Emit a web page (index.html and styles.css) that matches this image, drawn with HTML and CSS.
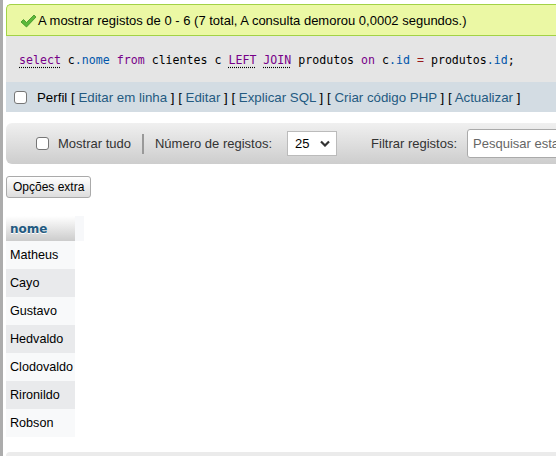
FILE: index.html
```html
<!DOCTYPE html>
<html lang="pt">
<head>
<meta charset="utf-8">
<title>Resultados</title>
<link rel="stylesheet" href="styles.css">
</head>
<body>
<div class="page">
  <div class="success">
    <svg class="check" width="17" height="14" viewBox="0 0 17 14"><path d="M1 8 L3.5 5.5 L6.5 8.5 L14 1 L16 3 L6.5 13 Z" fill="#5cb93a" stroke="#3d8f24" stroke-width="0.8"/></svg>
    <span>A mostrar registos de 0 - 6 (7 total, A consulta demorou 0,0002 segundos.)</span>
  </div>
  <div class="sql">
    <code><span class="kw u">select</span> c<span class="v2">.nome</span> <span class="kw">from</span> clientes c <span class="kw u">LEFT</span> <span class="kw u">JOIN</span> produtos <span class="kw">on</span> c<span class="v2">.id</span> <span class="op">=</span> produtos<span class="v2">.id</span>;</code>
  </div>
  <div class="profile">
    <span class="cb"></span>
    <span class="ptext">Perfil [ <a>Editar em linha</a> ] [ <a>Editar</a> ] [ <a>Explicar SQL</a> ] [ <a>Criar código PHP</a> ] [ <a>Actualizar</a> ]</span>
  </div>
  <div class="nav">
    <span class="cb"></span>
    <span class="lbl">Mostrar tudo</span>
    <span class="sep"></span>
    <span class="lbl">Número de registos:</span>
    <span class="select">25<svg width="10" height="7" viewBox="0 0 10 7"><path d="M1 1.5 L5 5.5 L9 1.5" fill="none" stroke="#333" stroke-width="2.2"/></svg></span>
    <span class="lbl filt">Filtrar registos:</span>
    <span class="search">Pesquisar esta tabela</span>
  </div>
  <div class="btnrow"><span class="btn">Opções extra</span></div>
  <div class="tablewrap">
    <table class="data">
      <thead><tr><th>nome</th><th class="blank"></th></tr></thead>
      <tbody>
        <tr class="odd"><td>Matheus</td></tr>
        <tr class="even"><td>Cayo</td></tr>
        <tr class="odd"><td>Gustavo</td></tr>
        <tr class="even"><td>Hedvaldo</td></tr>
        <tr class="odd"><td>Clodovaldo</td></tr>
        <tr class="even"><td>Rironildo</td></tr>
        <tr class="odd"><td>Robson</td></tr>
      </tbody>
    </table>
  </div>
  <div class="bottom"></div>
</div>
</body>
</html>
```
FILE: styles.css
```css
html, body {
  margin: 0;
  padding: 0;
  background: #fff;
  overflow: hidden;
}
body {
  font-family: "Liberation Sans", Arial, sans-serif;
  font-size: 13px;
  color: #000;
  height: 456px;
}
.page {
  border-left: 3px solid #acacac;
  padding-left: 3px;
  height: 456px;
  box-sizing: border-box;
  padding-top: 4px;
  width: 700px;
}
.success {
  height: 32px;
  box-sizing: border-box;
  background: #ebf8a4;
  border: 1px solid #a2d246;
  border-right: none;
  border-radius: 5px 0 0 0;
  display: flex;
  align-items: center;
  padding-left: 13px;
  gap: 1px;
  font-size: 13px;
  color: #000;
}
.check { margin-top: 1px; }
.sql {
  height: 46px;
  background: #e5e5e5;
  display: flex;
  align-items: center;
  padding-left: 13px;
  padding-top: 2px;
  box-sizing: border-box;
}
.sql code {
  font-family: "DejaVu Sans Mono", "Liberation Mono", monospace;
  font-size: 11.6px;
  color: #000;
}
.kw { color: #770088; }
.u { text-decoration: underline dotted #000; text-underline-offset: 3px; }
.v2 { color: #0055aa; }
.op { color: #981a1a; }
.profile {
  height: 30px;
  background: #d3dce3;
  display: flex;
  align-items: center;
  padding-left: 8px;
  gap: 10px;
  color: #000;
  font-size: 13.3px;
}
.profile a { color: #235a81; }
.cb {
  width: 11px;
  height: 11px;
  border: 1px solid #767676;
  border-radius: 3px;
  background: #fff;
  flex: none;
}
.nav {
  margin-top: 11px;
  height: 41px;
  box-sizing: border-box;
  border-radius: 6px 0 0 6px;
  background: linear-gradient(#f0f0f0, #cdcdcd);
  display: flex;
  align-items: center;
  padding-left: 30px;
  color: #333;
}
.nav .cb { margin-right: 9px; }
.sep {
  width: 2px;
  height: 20px;
  background: #999;
  margin: 0 11px;
}
.select {
  margin-left: 15px;
  width: 50px;
  height: 25px;
  box-sizing: border-box;
  border: 1px solid #bbb;
  background: #fff;
  display: flex;
  align-items: center;
  justify-content: space-between;
  padding: 0 6px 0 7px;
  color: #000;
}
.filt { margin-left: 34px; }
.search {
  margin-left: 10px;
  width: 200px;
  height: 29px;
  box-sizing: border-box;
  border: 1px solid #aaa;
  border-radius: 3px 0 0 3px;
  background: #fff;
  display: flex;
  align-items: center;
  padding-left: 5px;
  color: #666;
}
.btnrow {
  margin-top: 12px;
  display: flex;
}
.btn {
  height: 22px;
  box-sizing: border-box;
  padding: 0 6px;
  border: 1px solid #aaa;
  border-radius: 3px;
  background: linear-gradient(#fff, #ddd);
  display: flex;
  align-items: center;
  font-size: 12px;
  color: #000;
}
.tablewrap { margin-top: 18px; }
.data {
  border-collapse: collapse;
}
.data th {
  height: 25px;
  padding: 0 3px 0 4px;
  text-align: left;
  font-family: "DejaVu Sans", Verdana, sans-serif;
  font-size: 12px;
  font-weight: bold;
  color: #235a81;
  background: linear-gradient(#fff, #ccc);
  text-shadow: 0 1px 0 #fff;
}
.data th.blank {
  width: 1px;
  padding: 0 4px;
  background: #f7f8fa;
}
.data td {
  height: 28px;
  padding: 0 2px 0 4px;
  font-size: 12.6px;
}
.odd td { background: #f8f9fa; }
.even td { background: #e9eaec; }
.bottom {
  margin-top: 15px;
  height: 10px;
  background: #ebebeb;
  border-radius: 4px 0 0 0;
}
```
